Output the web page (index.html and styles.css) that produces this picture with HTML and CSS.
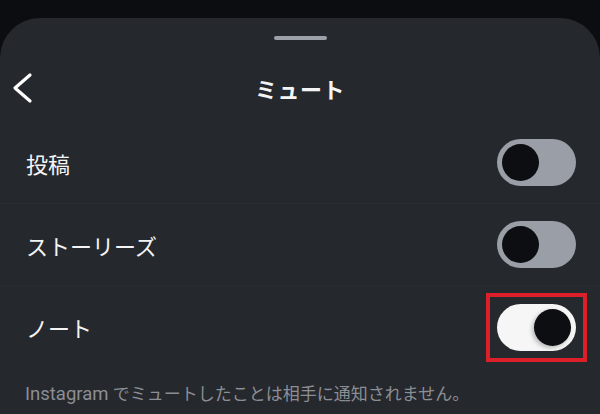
FILE: index.html
```html
<!DOCTYPE html>
<html lang="ja">
<head>
  <meta charset="UTF-8">
  <title>ミュート</title>
  <link rel="stylesheet" href="styles.css">
</head>
<body>

  <div class="sheet">
    <div class="handle"></div>

    <div class="header">
      <button class="back" aria-label="戻る">
        <svg width="24" height="32" viewBox="0 0 24 32">
          <polyline points="18,3 3,16 18,29" fill="none" stroke="#fff" stroke-width="3.2" stroke-linecap="round" stroke-linejoin="round"/>
        </svg>
      </button>
      <h1 class="title">ミュート</h1>
      <span></span>
    </div>

    <ul class="mute-list">
      <li class="row">
        <span class="label">投稿</span>
        <span class="toggle"><span class="knob"></span></span>
      </li>
      <li class="row">
        <span class="label">ストーリーズ</span>
        <span class="toggle"><span class="knob"></span></span>
      </li>
      <li class="row last">
        <span class="label">ノート</span>
        <span class="highlight">
          <span class="toggle on"><span class="knob"></span></span>
        </span>
      </li>
    </ul>

    <p class="note"><span class="brand">Instagram</span> でミュートしたことは相手に通知されません。</p>
  </div>

</body>
</html>
```

FILE: styles.css
```css
:root {
  --bg:     #0c0d11;
  --sheet:  #25282d;
  --text:   #f4f4f5;
  --subtle: #8b8e94;
  --line:   #292c31;
  --track:  #9a9ea6;
  --knob:   #0d0e12;
  --red:    #dc1f29;
}

html, body {
  margin: 0;
  height: 100%;
  background: var(--bg);
  overflow: hidden;
}

body {
  font-family: Roboto, "Noto Sans CJK JP", sans-serif;
  color: var(--text);
  padding-top: 18px;
  box-sizing: border-box;
}

.sheet {
  background: var(--sheet);
  border-radius: 40px 40px 0 0;
  height: 100%;
  padding-top: 18px;
  box-sizing: border-box;
}

.handle {
  width: 53px;
  height: 4px;
  margin: 0 auto;
  border-radius: 2px;
  background: #9ca1a9;
}

/* header: back chevron + centred title */
.header {
  display: grid;
  grid-template-columns: 70px 1fr 70px;
  align-items: center;
  height: 64px;
  margin: 16px 0 2px;
}
.back {
  background: none;
  border: 0;
  padding: 0 0 0 12px;
  display: flex;
  align-items: center;
  justify-content: flex-start;
}
.title {
  margin: 0;
  text-align: center;
  font-family: "Noto Sans CJK JP", sans-serif;
  font-size: 22px;
  font-weight: 700;
  letter-spacing: 0.5px;
}

.mute-list {
  list-style: none;
  margin: 0;
  padding: 0;
}

.row {
  display: flex;
  align-items: center;
  justify-content: space-between;
  height: 82px;
  padding: 0 24px 0 26px;
  border-bottom: 1px solid var(--line);
  box-sizing: border-box;
}
.row.last { border-bottom: 0; }

.label {
  font-family: "Noto Sans CJK JP", sans-serif;
  font-size: 22px;
}

/* switch */
.toggle {
  display: flex;
  align-items: center;
  width: 79px;
  height: 47px;
  padding: 0 5px;
  border-radius: 24px;
  background: var(--track);
  box-sizing: border-box;
}
.knob {
  width: 37px;
  height: 37px;
  border-radius: 50%;
  background: var(--knob);
}
.toggle.on {
  background: #f6f6f6;
  justify-content: flex-end;
}
.toggle.on .knob {
  box-shadow: -2px 2px 4px rgba(0,0,0,0.25);
}

/* red annotation box around the active switch */
.highlight {
  border: 4px solid var(--red);
  padding: 7px;
  margin: -11px -11px -11px 0;
}

.note {
  margin: 0;
  padding: 14px 25px 0;
  font-size: 17px;
  line-height: 24px;
  color: var(--subtle);
}
.note .brand {
  font-size: 18.5px;
}
```
